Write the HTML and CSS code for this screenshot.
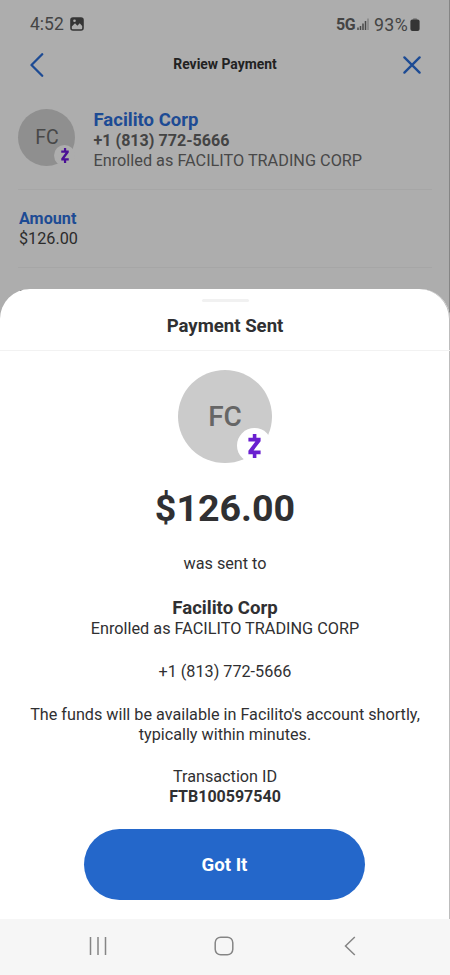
FILE: index.html
```html
<!DOCTYPE html>
<html lang="en">
<head>
<meta charset="utf-8">
<title>Payment Sent</title>
<link rel="stylesheet" href="styles.css">
</head>
<body>
<div class="phone">
  <main class="review">
    <div class="status">
      <span class="clock">4:52</span>
      <svg class="photo" viewBox="0 0 14 14"><rect x="1" y="1" width="12" height="12" rx="2" fill="#353535" stroke="#353535" stroke-width="1.6"/><path d="M1.8 9.6 5 6.2l2.4 2.5 2.3-2.5 2.5 2.7v2.4q0 .9-.9.9H2.7q-.9 0-.9-.9z" fill="#adadad"/><circle cx="4.5" cy="3.7" r="1.3" fill="#adadad"/></svg>
      <span class="network">5G</span>
      <svg class="signal" viewBox="0 0 12 12"><path d="M1 12V9.5M3.5 12V8M6 12V5.5M8.5 12V3" stroke="#484848" stroke-width="1.5"/><path d="M11 12V.5" stroke="#858585" stroke-width="1.5"/></svg>
      <span class="percent">93%</span>
      <svg class="battery" viewBox="0 0 10 13"><rect x="3" width="4" height="3" rx="1" fill="#858585"/><rect x=".4" y="1.4" width="9.2" height="11.6" rx="2" fill="#353535"/></svg>
    </div>
    <header class="bar">
      <svg class="back" viewBox="0 0 14 24"><path d="M12.2 1.2 1.5 12l10.7 10.8" fill="none" stroke="#1d4b94" stroke-width="2.3" stroke-linecap="round" stroke-linejoin="round"/></svg>
      <h1 class="bar-title">Review Payment</h1>
      <svg class="close" viewBox="0 0 18 18"><path d="m1.4 1.4 15.2 15.2M16.6 1.4 1.4 16.6" stroke="#1d4b94" stroke-width="2.3" stroke-linecap="round"/></svg>
    </header>
    <section class="payee">
      <div class="avatar avatar-dim">FC
        <span class="badge"><svg class="zelle" viewBox="0 0 13 24" fill="#4a0f96"><path d="M4.8 0h3.6v4.2H4.8zM4.8 19.8h3.6V24H4.8zM.4 3.8h12.2v3.4L5.6 16.4h7v3.8H.4v-3.4l7-9.2h-7z"/></svg></span>
      </div>
      <div>
        <div class="payee-name">Facilito Corp</div>
        <div class="payee-phone">+1 (813) 772-5666</div>
        <div class="payee-note">Enrolled as FACILITO TRADING CORP</div>
      </div>
    </section>
    <section class="amount">
      <div class="amount-label">Amount</div>
      <div class="amount-value">$126.00</div>
    </section>
    <div class="next-hint"></div>
  </main>
  <section class="sheet">
    <div class="grip"></div>
    <h2 class="sheet-title">Payment Sent</h2>
    <div class="sheet-body">
      <div class="avatar avatar-large">FC
        <span class="badge"><svg class="zelle" viewBox="0 0 13 24" fill="#6a20d0"><path d="M4.8 0h3.6v4.2H4.8zM4.8 19.8h3.6V24H4.8zM.4 3.8h12.2v3.4L5.6 16.4h7v3.8H.4v-3.4l7-9.2h-7z"/></svg></span>
      </div>
      <div class="total">$126.00</div>
      <p class="line sent">was sent to</p>
      <p class="recipient">Facilito Corp</p>
      <p class="line enrolled">Enrolled as FACILITO TRADING CORP</p>
      <p class="line phone-number">+1 (813) 772-5666</p>
      <p class="line funds">The funds will be available in Facilito's account shortly,<br>typically within minutes.</p>
      <p class="line">Transaction ID</p>
      <p class="line transaction">FTB100597540</p>
      <button class="confirm">Got It</button>
    </div>
    <nav class="system-nav">
      <svg class="nav-recents" viewBox="0 0 18 18"><path d="M1.5 0v18M9 0v18M16.5 0v18" stroke="#858585" stroke-width="1.5"/></svg>
      <svg class="nav-home" viewBox="0 0 20 20"><rect x="1.2" y="1.2" width="17.6" height="17.6" rx="5.5" fill="none" stroke="#858585" stroke-width="1.5"/></svg>
      <svg class="nav-back" viewBox="0 0 12 20"><path d="M10.8 1 1.5 10l9.3 9" fill="none" stroke="#858585" stroke-width="1.5"/></svg>
    </nav>
  </section>
</div>
</body>
</html>
```
FILE: styles.css
```css
* { box-sizing: border-box; }
body, h1, h2, p { margin: 0; }
body { font-family: Roboto, sans-serif; color: #303032; }
svg { display: block; flex: none; }
.phone { position: relative; width: 450px; height: 975px; overflow: hidden; background: #adadad; }
.review { height: 400px; border-right: 1px solid #858585; }
.status { display: flex; align-items: center; height: 48px; padding: 0 29px 0 30px; color: #444; }
.clock { font-size: 17.5px; width: 40px; }
.photo { width: 14px; height: 14px; }
.network { margin-left: auto; font-size: 16px; font-weight: 700; letter-spacing: -.5px; }
.signal { width: 12px; height: 12px; margin: 0 5px 0 2px; }
.percent { font-size: 17.8px; letter-spacing: .3px; }
.battery { width: 10px; height: 13px; margin-left: 2px; }
.bar { display: flex; align-items: center; justify-content: space-between; height: 33px; padding: 0 28px 0 30px; }
.back { width: 14px; height: 24px; }
.bar-title { margin: -2px 0 0 3px; font-size: 13.9px; line-height: 20px; font-weight: 700; color: #222; }
.close { width: 18px; height: 18px; }
.payee { display: flex; gap: 18.5px; height: 109px; margin: 0 17px 0 18px; padding-top: 28px; border-bottom: 1px solid #a6a6a6; }
.avatar { position: relative; display: flex; align-items: center; justify-content: center; border-radius: 50%; }
.badge { position: absolute; display: flex; align-items: center; justify-content: center; border-radius: 50%; }
.avatar-dim { width: 57px; height: 57px; padding-left: 1px; background: #8f8f8f; color: #484848; font-size: 19.5px; }
.avatar-dim .badge { right: 0; bottom: 0; width: 21px; height: 21px; background: #adadad; }
.avatar-dim .zelle { width: 8px; height: 15px; }
.payee-name { font-size: 18.5px; line-height: 22px; font-weight: 700; color: #1d4b94; }
.payee-phone { font-size: 16.1px; line-height: 20px; font-weight: 700; color: #444; }
.payee-note { font-size: 16.28px; line-height: 19px; color: #484848; }
.amount { height: 78px; margin: 0 17px 0 18px; padding: 19px 0 0 1px; border-bottom: 1px solid #a6a6a6; }
.amount-label { font-size: 16.2px; line-height: 20px; font-weight: 700; color: #1d4b94; }
.amount-value { font-size: 16.2px; line-height: 19px; color: #2b2b2b; }
.next-hint { width: 3px; height: 1px; margin: 22px 0 0 20px; background: #555; }
.sheet { position: absolute; top: 289px; left: 0; display: flex; flex-direction: column; width: 450px; height: 686px; background: #fff; border-radius: 30px 30px 0 0; box-shadow: inset -1px 0 #bdbdbd; }
.grip { width: 47px; height: 3px; margin: 10px auto 0; border-radius: 2px; background: #f1f1f1; }
.sheet-title { height: 49px; padding-top: 13px; border-bottom: 1px solid #f2f2f2; text-align: center; font-size: 18.6px; line-height: 22px; font-weight: 700; }
.sheet-body { display: flex; flex: 1; flex-direction: column; align-items: center; padding-top: 19px; text-align: center; }
.avatar-large { width: 94px; height: 93px; padding-bottom: 1px; background: #cbcbcb; color: #666; font-size: 28px; font-weight: 500; }
.avatar-large .badge { right: 0; bottom: 0; width: 35px; height: 35px; background: #fff; }
.avatar-large .zelle { width: 13px; height: 24px; }
.total { margin-top: 22px; font-size: 37.6px; line-height: 46px; font-weight: 700; }
.line { font-size: 16.2px; line-height: 20px; }
.sent { margin: 23px 0; }
.recipient { font-size: 18.6px; line-height: 22px; font-weight: 700; }
.enrolled { font-size: 16.28px; }
.phone-number { margin: 23px 0; }
.funds { margin-bottom: 23px; line-height: 19.5px; }
.transaction { font-size: 16px; font-weight: 700; line-height: 19px; }
.confirm { width: 281px; height: 71px; margin: 23px 1px 0 0; padding: 0; border: 0; border-radius: 36px; background: #2467ca; color: #fff; font: 700 18.6px/22px Roboto, sans-serif; }
.system-nav { display: flex; align-items: center; justify-content: space-between; height: 56px; padding: 0 94px 2px 89px; background: #f6f6f6; }
.nav-recents { width: 18px; height: 18px; }
.nav-home { width: 20px; height: 20px; margin-right: 4px; }
.nav-back { width: 12px; height: 20px; }
```
